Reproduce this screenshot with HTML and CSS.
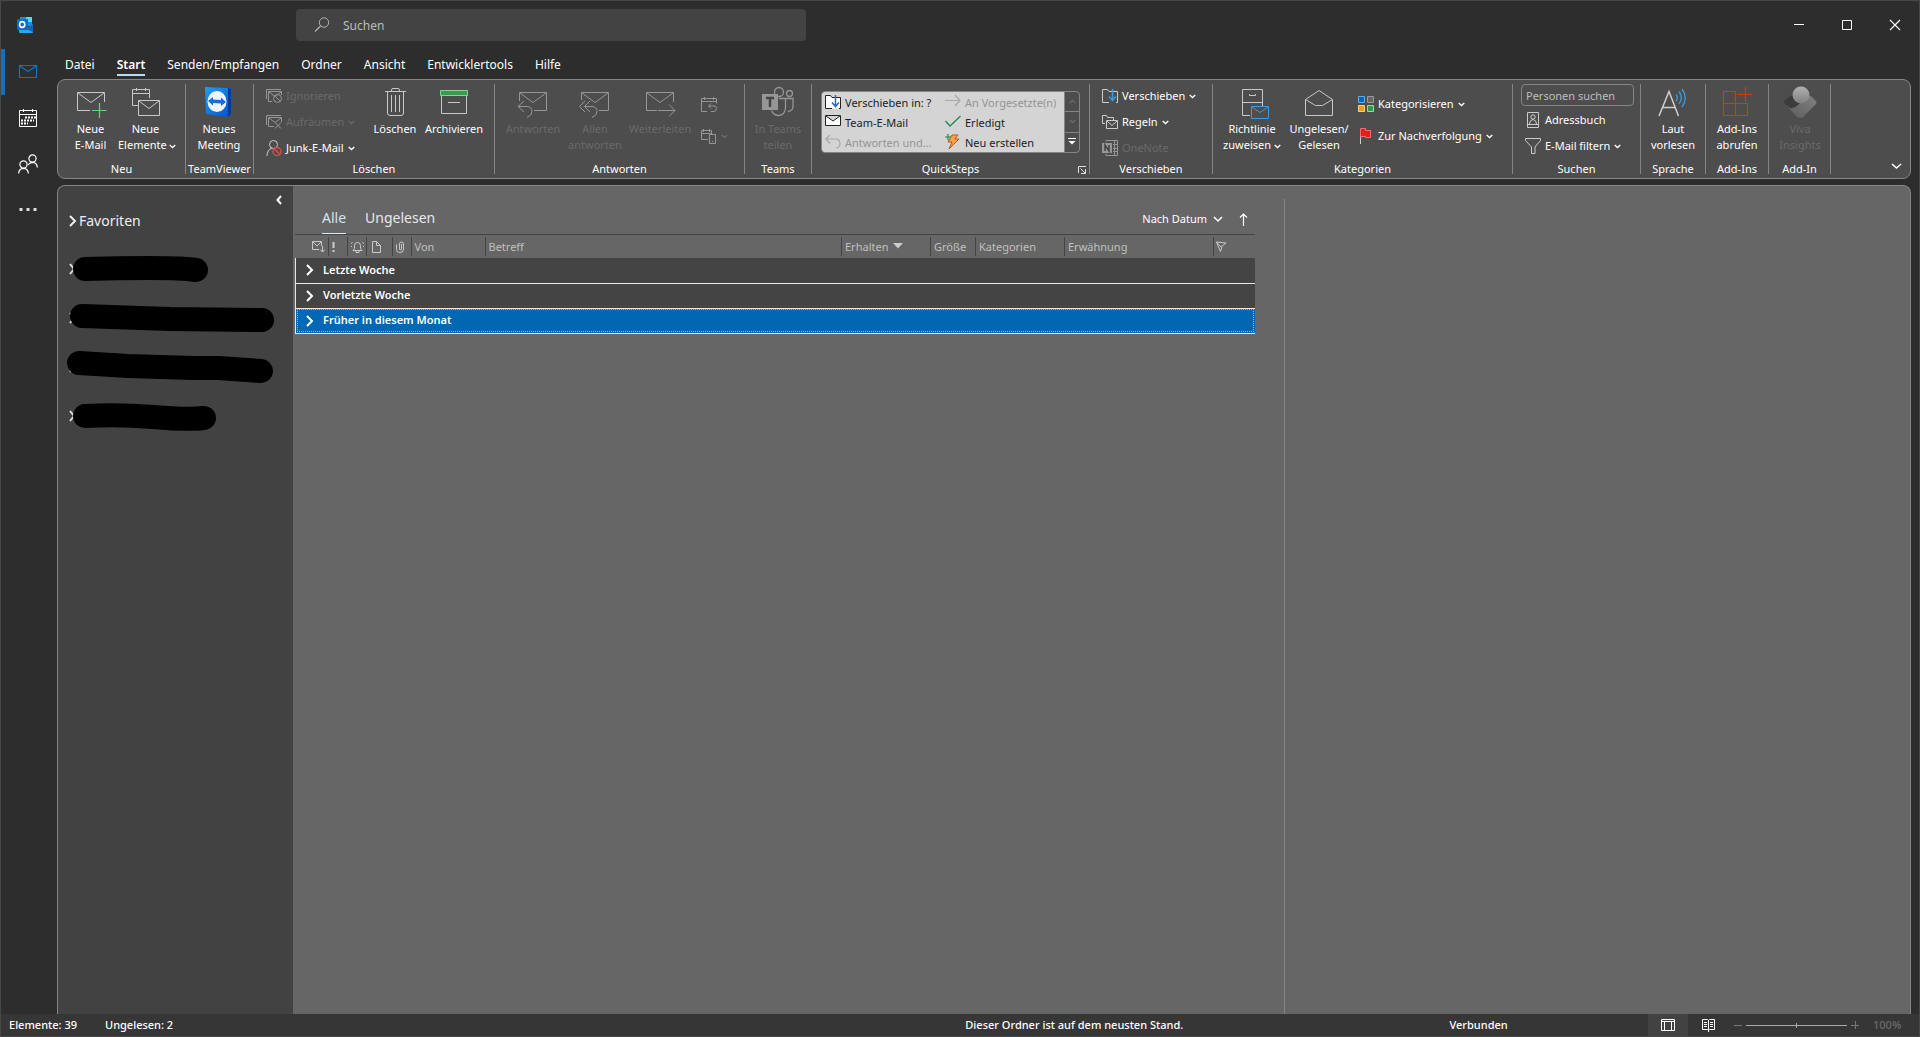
FILE: index.html
```html
<!DOCTYPE html>
<html lang="de">
<head>
<meta charset="utf-8">
<title>Outlook</title>
<link rel="stylesheet" href="styles.css">
</head>
<body>
<svg class="defs" aria-hidden="true">
  <symbol id="chev" viewBox="0 0 7 5"><path d="M.7 1l2.8 2.6L6.3 1" fill="none" stroke="currentColor" stroke-width="1.3"/></symbol>
  <symbol id="right" viewBox="0 0 8 12"><path d="M1 1l5 5-5 5" fill="none" stroke="currentColor" stroke-width="2"/></symbol>
</svg>
<div class="window">
  <header class="titlebar">
    <svg class="logo" width="16" height="16" viewBox="0 0 16 16"><path d="M3 0h12v9H3z" fill="#1490df"/><path d="M9 0h6v5H9z" fill="#50d9ff"/><path d="M3 5h6v4H3z" fill="#0a64b8"/><path d="M2 8l7 4 7-5v8q0 1-1 1H3q-1 0-1-1z" fill="#28a8ea"/><path d="M9 12l7-5v8z" fill="#1464b4"/><rect y="2" width="11" height="11" rx="1" fill="#0f6cbd"/><ellipse cx="5.200" cy="7.500" rx="2.600" ry="2.900" fill="none" stroke="#fff" stroke-width="1.600"/></svg>
    <label class="search"><svg width="16" height="16" viewBox="0 0 16 16"><circle cx="10" cy="5.500" r="4.700" fill="none" stroke="currentColor"/><path d="M6.500 9L1 14.500" stroke="currentColor" stroke-width="1.200"/></svg><input type="search" placeholder="Suchen" aria-label="Suchen"></label>
    <div class="controls">
      <button aria-label="Minimieren"><svg width="12" height="12"><path d="M1 5.500h10" stroke="#fff"/></svg></button>
      <button aria-label="Maximieren"><svg width="12" height="12"><path d="M1.500 1.500h9v9h-9z" fill="none" stroke="#fff"/></svg></button>
      <button aria-label="Schließen"><svg width="12" height="12"><path d="M1 1l10 10M11 1L1 11" stroke="#fff" stroke-width="1.200"/></svg></button>
    </div>
  </header>

  <nav class="rail" aria-label="Module">
    <button class="active" aria-label="E-Mail"><svg width="20" height="20" viewBox="0 0 20 20"><path d="M1.500 3.500h17v12h-17zM2 4l8 5.500L18 4" fill="none" stroke="currentColor" stroke-width="1.200"/></svg></button>
    <button aria-label="Kalender"><svg width="20" height="20" viewBox="0 0 20 20"><path d="M1.500 2.500h17v16h-17zM1.500 6.500h17M5.500 1v3M14.500 1v3" fill="none" stroke="currentColor"/><path d="M7 9.500h11M3 12.500h13M3 15.500h7" fill="none" stroke="currentColor" stroke-width="2" stroke-dasharray="2 1"/></svg></button>
    <button aria-label="Personen"><svg width="20" height="20" viewBox="0 0 20 20"><g fill="none" stroke="currentColor" stroke-width="1.200"><circle cx="5.500" cy="10.500" r="3.600"/><path d="M.6 19.500q.4-5 4.900-5.200 4.500.2 4.900 5.200"/><circle cx="14.500" cy="4.500" r="3.600"/><path d="M10 11q1.500-2.500 4.500-2.700 4.500.2 4.900 5.200"/></g></svg></button>
    <button aria-label="Mehr"><svg width="20" height="20" viewBox="0 0 20 20"><path d="M1.500 8h3v3h-3zM8.500 8h3v3h-3zM15.500 8h3v3h-3z" fill="#ddd"/></svg></button>
  </nav>

  <nav class="tabs" aria-label="Menüband">
    <a href="#">Datei</a><a href="#" class="active">Start</a><a href="#">Senden/Empfangen</a><a href="#">Ordner</a><a href="#">Ansicht</a><a href="#">Entwicklertools</a><a href="#">Hilfe</a>
  </nav>

  <section class="ribbon">
    <div class="group g-new">
      <div class="tools">
        <button class="big w55"><svg viewBox="0 0 32 32"><path d="M15 24.500H2.500v-18h27V16M3 7l13 9.500L29 7" fill="none" stroke="#c8c8c8"/><path d="M17 24.500h14.500M24.500 17v15" stroke="#5fd87c" stroke-width="1.200"/></svg>Neue<br>E-Mail</button>
        <button class="big w55"><svg viewBox="0 0 32 32"><g fill="none" stroke="#c8c8c8"><path d="M8 19.500H2.500v-16h17V12M2.500 7.500h17M6.500 2v3M15.500 2v3M8.500 14.500h21v15h-21zM9 15l10 7.500L29 15"/></g></svg>Neue<br>Elemente <svg class="chev"><use href="#chev"/></svg></button>
      </div>
      <h2>Neu</h2>
    </div>
    <div class="group g-tv">
      <div class="tools">
        <button class="big w66"><svg viewBox="0 0 32 32"><defs><linearGradient id="tv" x1="0" y1="0" x2="1" y2="1"><stop offset="0" stop-color="#1ea0f5"/><stop offset="1" stop-color="#0650c8"/></linearGradient></defs><path d="M2 1l22 1 4 1v25l-4 3L3 28z" fill="url(#tv)"/><path d="M25 2l3 1v25l-3 3z" fill="#043aa0"/><ellipse cx="14" cy="15.500" rx="9.500" ry="10.500" fill="#f0f4fa"/><path d="M5 15l5-4v2.500l8 .5v-2.500l5 4.500-5 4v-2.500l-8-.5v2.500z" fill="#1470d8"/></svg>Neues<br>Meeting</button>
      </div>
      <h2>TeamViewer</h2>
    </div>
    <div class="group g-del">
      <div class="tools">
        <div class="stack">
          <button class="small" disabled><svg viewBox="0 0 16 16"><g fill="none" stroke="currentColor"><path d="M.5 11V1.500H15M6 13.500H2.500v-10h13V7M3 4l6 4.500L15 4"/><circle cx="11.500" cy="10.500" r="4"/><path d="M9 8l5 5"/></g></svg>Ignorieren</button>
          <button class="small" disabled><svg viewBox="0 0 16 16"><path d="M.5 11V1.500H15M8 12.500H2.500v-9h13V8M3 4l6 4.500L15 4M9 8.500l6 6M15 8.500l-6 6" fill="none" stroke="currentColor"/></svg>Aufräumen <svg class="chev"><use href="#chev"/></svg></button>
          <button class="small"><svg viewBox="0 0 16 16"><g fill="none" stroke="#ccc"><circle cx="7.500" cy="4.500" r="4"/><path d="M1 16q0-6 5-8"/></g><circle cx="11" cy="11.500" r="4" fill="#4d4d4d" stroke="#e8494f" stroke-width="1.300"/><path d="M8.300 9l5.400 5" stroke="#e8494f" stroke-width="1.300"/></svg>Junk-E-Mail <svg class="chev"><use href="#chev"/></svg></button>
        </div>
        <button class="big w58"><svg viewBox="0 0 32 32"><path d="M6 5.500h21M12.500 5V4q0-1.500 1.500-1.500h5q1.500 0 1.500 1.500v1M8.500 6v21q0 2.500 2.500 2.500h11q2.500 0 2.500-2.500V6M12.500 9v17M16.500 9v17M20.500 9v17" fill="none" stroke="#c8c8c8"/></svg>Löschen</button>
        <button class="big w60"><svg viewBox="0 0 32 32"><path d="M3.500 9.500h25v18h-25zM10 16.500h12" fill="none" stroke="#c8c8c8"/><path d="M2.500 4.500h27v5h-27z" fill="#3a9b50" stroke="#7fd793"/></svg>Archivieren</button>
      </div>
      <h2>Löschen</h2>
    </div>
    <div class="group g-ans">
      <div class="tools">
        <button class="big w60" disabled><svg viewBox="0 0 32 32"><path d="M2.500 15V6.500h27v18H17M3 7l13 9.500L29 7M7 15l-6 5.500L7 26M1 20.500h9q5 .5 5 5 0 4-5 6" fill="none" stroke="currentColor"/></svg>Antworten</button>
        <button class="big w64" disabled><svg viewBox="0 0 32 32"><path d="M2.500 14V6.500h27v18H20M3 7l13 9.500L29 7M6 15l-5.500 5.500L6 26M11 15l-5.500 5.500L11 26M6 20.500h7q5 .5 5 5 0 4-5 6" fill="none" stroke="currentColor"/></svg>Allen<br>antworten</button>
        <button class="big w66" disabled><svg viewBox="0 0 32 32"><path d="M13 24.500H2.500v-18h27V16M3 7l13 9.500L29 7M14 24.500h17M25 18.500l6 6-6 6" fill="none" stroke="currentColor"/></svg>Weiterleiten</button>
        <div class="stack loose">
          <button class="small" disabled aria-label="Besprechung"><svg viewBox="0 0 16 16"><path d="M6 15.500H.500v-13h15v5M.500 5.500h15M3.500 1v3M12.500 1v3M10 7.500l-2.500 2.500 2.500 2.500M8 10h5q2.500 0 2.500 2.500T13 15.500h-3" fill="none" stroke="currentColor"/></svg></button>
          <button class="small" disabled aria-label="Weitere"><svg viewBox="0 0 16 16"><path d="M7 11.500H.500v-9h10V6M.500 5.500h10M2.500 1v3M8.500 1v3M8.500 6.500h6v9h-6zM11 13.500h1" fill="none" stroke="currentColor"/></svg><svg class="chev"><use href="#chev"/></svg></button>
        </div>
      </div>
      <h2>Antworten</h2>
    </div>
    <div class="group g-teams">
      <div class="tools">
        <button class="big w66" disabled><svg viewBox="0 0 32 32"><g fill="none" stroke="currentColor" stroke-width="1.300"><circle cx="17" cy="6" r="4.500"/><circle cx="27.500" cy="7.500" r="3"/><path d="M17 12.500h6.500V22q-.5 7-7 7.500-5.500-.5-7-5M23.500 12.500H31V21q-.5 4-5 4.500"/></g><path d="M0 8h16v16H0z" fill="#969696"/><path d="M4 12h8M8 12v9" stroke="#444" stroke-width="2.500"/></svg>In Teams<br>teilen</button>
      </div>
      <h2>Teams</h2>
    </div>
    <div class="group g-quick">
      <div class="tools">
        <div class="gallery">
          <div class="steps">
            <button><svg viewBox="0 0 16 16"><path d="M7 14.500H.500v-13h5l1.500 2h8.500v11H14" fill="#fff" stroke="#222"/><path d="M10.500 1v11M7 8.500l3.500 4 3.500-4" fill="none" stroke="#2a6cc0" stroke-width="1.500"/></svg>Verschieben in: ?</button>
            <button disabled><svg viewBox="0 0 16 16"><path d="M0 6.500h15M10 1l5 5.500-5 5.500" fill="none" stroke="#a8a8a8" stroke-width="1.200"/></svg>An Vorgesetzte(n)</button>
            <button><svg viewBox="0 0 16 16"><path d="M.500 1.500h15v10H.500zM1 2l7 5 7-5" fill="#fff" stroke="#222"/></svg>Team-E-Mail</button>
            <button><svg viewBox="0 0 16 16"><path d="M.500 7l4.500 5L15.500 2" fill="none" stroke="#1f8a4a" stroke-width="1.300"/></svg>Erledigt</button>
            <button disabled><svg viewBox="0 0 16 16"><path d="M5 1L.8 5 5 9.500M1 5h10q4 .5 4 4.500t-4 4.500" fill="none" stroke="#a8a8a8" stroke-width="1.200"/></svg>Antworten und...</button>
            <button><svg viewBox="0 0 16 16"><path d="M7 1h6l-3 4h4L4 15l3-7H3z" fill="#f7a04a" stroke="#b85a14"/><path d="M3 0v6M0 3h6" stroke="#1f8a4a" stroke-width="1.200"/></svg>Neu erstellen</button>
          </div>
          <div class="spin">
            <button disabled aria-label="Nach oben"><svg class="chev flip"><use href="#chev"/></svg></button>
            <button disabled aria-label="Nach unten"><svg class="chev"><use href="#chev"/></svg></button>
            <button aria-label="Weitere QuickSteps"><svg width="8" height="8" viewBox="0 0 8 8"><path d="M0 .500h8" stroke="#fff"/><path d="M.500 3h7L4 6.500z" fill="#fff"/></svg></button>
          </div>
        </div>
      </div>
      <h2>QuickSteps</h2>
      <button class="launcher" aria-label="QuickSteps verwalten"><svg width="8" height="8" viewBox="0 0 8 8"><path d="M.500 7V.500H8M2.500 2.500l5 5M7.500 3v4.500H3" fill="none" stroke="#ddd"/></svg></button>
    </div>
    <div class="group g-move">
      <div class="tools">
        <div class="stack">
          <button class="small"><svg viewBox="0 0 16 16"><path d="M7 14.500H.500v-13h5l1.500 2h8.500v11H14" fill="none" stroke="#ccc"/><path d="M10.500 1v11M7 8.500l3.500 4 3.500-4" fill="none" stroke="#3c9be0" stroke-width="1.500"/></svg>Verschieben <svg class="chev"><use href="#chev"/></svg></button>
          <button class="small"><svg viewBox="0 0 16 16"><path d="M3 9.500H.500v-8h4l1 2h6V6M4.500 6.500h11v8h-11zM5 7l5 4.500L15 7" fill="none" stroke="#ccc"/></svg>Regeln <svg class="chev"><use href="#chev"/></svg></button>
          <button class="small" disabled><svg viewBox="0 0 16 16"><path d="M0 3h10v10H0z" fill="#969696"/><path d="M3 11V5l4 6V5" fill="none" stroke="#444" stroke-width="1.500"/><path d="M4 1.500V.500h11.500v15H4v-2M11 4.500h4M11 8.500h4M11 11.500h4M12.500 1v14" fill="none" stroke="#969696"/></svg>OneNote</button>
        </div>
      </div>
      <h2>Verschieben</h2>
    </div>
    <div class="group g-cat">
      <div class="tools">
        <button class="big w64"><svg viewBox="0 0 32 32"><path d="M14 29.500H6.500v-26h20V20M6.500 16.500h20M13.500 8v1.500h6V8" fill="none" stroke="#c8c8c8"/><path d="M15.500 20.500h17v12h-17zM16 21l8 5.500 8-5.500" fill="none" stroke="#3c9be0"/></svg>Richtlinie<br>zuweisen <svg class="chev"><use href="#chev"/></svg></button>
        <button class="big w70"><svg viewBox="0 0 32 32"><path d="M2.500 13.500L16 4.500l13.500 9v16h-27zM2.500 13.500l10 6h7l10-6" fill="none" stroke="#c8c8c8"/></svg>Ungelesen/<br>Gelesen</button>
        <div class="stack loose">
          <button class="small"><svg viewBox="0 0 16 16"><path d="M.500.500h6v6h-6z" fill="#0067b8" stroke="#5eaef0"/><path d="M9.500.500h6v6h-6z" fill="#666" stroke="#999"/><path d="M.500 9.500h6v6h-6z" fill="#f09a20" stroke="#ffd080"/><path d="M9.500 9.500h6v6h-6z" fill="#2f9a48" stroke="#8fe0a0"/></svg>Kategorisieren <svg class="chev"><use href="#chev"/></svg></button>
          <button class="small"><svg viewBox="0 0 16 16"><path d="M2.500 1v15" stroke="#ccc"/><path d="M2.500.500h5v2h5v7h-5v-1h-5z" fill="#e02020" stroke="#ff6a6a"/></svg>Zur Nachverfolgung <svg class="chev"><use href="#chev"/></svg></button>
        </div>
      </div>
      <h2>Kategorien</h2>
    </div>
    <div class="group g-find">
      <div class="tools">
        <div class="stack">
          <input type="text" placeholder="Personen suchen" aria-label="Personen suchen">
          <button class="small"><svg viewBox="0 0 16 16"><path d="M2.500.500h11v15h-11zM2.500 12.500h11" fill="none" stroke="#ccc"/><circle cx="8" cy="5" r="2.200" fill="none" stroke="#ccc"/><path d="M4.500 12q0-4 3.500-4.500 3.500.5 3.500 4.500" fill="none" stroke="#ccc"/></svg>Adressbuch</button>
          <button class="small"><svg viewBox="0 0 16 16"><path d="M.500.500h15v2L10 9v6.500H6.500V9L.500 2.500z" fill="none" stroke="#ccc"/></svg>E-Mail filtern <svg class="chev"><use href="#chev"/></svg></button>
        </div>
      </div>
      <h2>Suchen</h2>
    </div>
    <div class="group g-voice">
      <div class="tools">
        <button class="big w64"><svg viewBox="0 0 32 32"><path d="M2 30L12 5.500 21.500 30M5.500 21.500h13" fill="none" stroke="#d0d0d0" stroke-width="1.500"/><path d="M19 8.500q2.500 3 0 7M22 5.500q4.500 6 0 12.500M25 3q6.500 9 0 18" fill="none" stroke="#3c9be0" stroke-width="1.300"/></svg>Laut<br>vorlesen</button>
      </div>
      <h2>Sprache</h2>
    </div>
    <div class="group g-addins">
      <div class="tools">
        <button class="big w62"><svg viewBox="0 0 32 32"><path d="M2.500 5.500h12v24h-12zM2.500 17.500h24v12h-12M16.500 8.500h15M24.500 1v15" fill="none" stroke="#d83b01" stroke-width="1.200"/></svg>Add-Ins<br>abrufen</button>
      </div>
      <h2>Add-Ins</h2>
    </div>
    <div class="group g-viva">
      <div class="tools">
        <button class="big w62" disabled><svg viewBox="0 0 32 32"><defs><linearGradient id="vv" x1="0" y1="0" x2="0" y2="1"><stop offset="0" stop-color="#b0b0b0"/><stop offset="1" stop-color="#808080"/></linearGradient><linearGradient id="vh" x1="0" y1="1" x2="1" y2="0"><stop offset="0" stop-color="#5c5c5c"/><stop offset="1" stop-color="#808080"/></linearGradient></defs><path d="M7 9.500q2-1 4 1l9 10-4 11q-1 0-4-3L1 18q-2-2 0-4z" fill="#3c3c3c"/><path d="M24 10q2-1 4 1l4 4q1 2 0 3L19 31q-3 2-6 0L2 19l4 3q4 1 8-3z" fill="url(#vh)"/><circle cx="17" cy="9" r="8.500" fill="url(#vv)"/></svg>Viva<br>Insights</button>
      </div>
      <h2>Add-In</h2>
    </div>
    <button class="collapse" aria-label="Menüband reduzieren"><svg width="11" height="7"><path d="M1 1l4.500 4L10 1" fill="none" stroke="#fff" stroke-width="1.600"/></svg></button>
  </section>

  <main class="content">
    <aside class="folders">
      <button class="hide" aria-label="Ordnerbereich minimieren"><svg width="6" height="10"><path d="M5 1L1.500 5 5 9" fill="none" stroke="#fff" stroke-width="2"/></svg></button>
      <h1><svg width="8" height="12"><use href="#right"/></svg>Favoriten</h1>
      <ul>
        <li><svg width="234" height="49"><path d="M12 19l4 5-4 5" class="tick"/><path d="M27 24Q60 23 92 23T138 25" class="bar"/></svg></li>
        <li><svg width="234" height="49"><path d="M12 19l4 5-4 5" class="tick"/><path d="M24 22L112 25 204 26" class="bar"/></svg></li>
        <li><svg width="234" height="49"><path d="M12 19l4 5-4 5" class="tick"/><path d="M21 20L70 23 135 25 160 25 203 28" class="bar"/></svg></li>
        <li><svg width="234" height="49"><path d="M12 19l4 5-4 5" class="tick"/><path d="M27 24Q60 22 95 25T146 26" class="bar"/></svg></li>
      </ul>
    </aside>
    <section class="list">
      <div class="filter">
        <a href="#" class="active">Alle</a><a href="#">Ungelesen</a>
        <button class="sort">Nach Datum <svg width="10" height="7"><path d="M1 1l4 4 4-4" fill="none" stroke="#fff" stroke-width="1.500"/></svg></button>
        <button aria-label="Sortierung umkehren"><svg width="9" height="13"><path d="M4.500 13V1M1 4.500L4.500 1 8 4.500" fill="none" stroke="#fff" stroke-width="1.200"/></svg></button>
      </div>
      <table>
        <colgroup><col class="c33"><col class="c19"><col class="c19"><col class="c26"><col class="c19"><col class="c74"><col><col class="c89"><col class="c45"><col class="c89"><col class="c149"><col class="c41"></colgroup>
        <thead><tr>
          <th class="end" aria-label="Status"><svg width="13" height="12"><path d="M7 8.500H.500v-8h9V5M1 1l4 4 4-4M10.500 5v6M8 8.500l2.500 2.500 2.500-2.500" fill="none" stroke="#c8c8c8"/></svg></th>
          <th aria-label="Wichtigkeit"><svg width="3" height="12"><path d="M1.500 1v6M1.500 9v2" stroke="#ccc" stroke-width="2"/></svg></th>
          <th aria-label="Erinnerung"><svg width="13" height="12"><path d="M2 9.500l1.500-2V4.500q0-3 3-3t3 3v3l1.500 2zM5 10v1.500h3V10M0 2.500l1.500-1M13 2.500l-1.500-1M0 5.500h1M12 5.500h1" fill="none" stroke="#c8c8c8"/></svg></th>
          <th aria-label="Typ"><svg width="11" height="12"><path d="M2.500.500h4l4 4v7h-8zM6.500.500v4h4" fill="none" stroke="#c8c8c8"/></svg></th>
          <th aria-label="Anlage"><svg width="8" height="12"><path d="M5.500 3v5q0 1-1 1t-1-1V3q0-2 2-2t2 2v5.500q0 3-3.500 3T.500 8.500V3.500" fill="none" stroke="#c8c8c8"/></svg></th>
          <th>Von</th><th>Betreff</th><th>Erhalten <svg class="down" width="10" height="6"><path d="M0 0h10L5 5.500z" fill="#ccc"/></svg></th><th>Größe</th><th>Kategorien</th><th>Erwähnung</th>
          <th aria-label="Kennzeichnung"><svg width="11" height="11"><path d="M.500 1l9.500 1-5 4zM.500 1l4 9.500L6 6" fill="none" stroke="#c8c8c8"/></svg></th>
        </tr></thead>
        <tbody>
          <tr><td colspan="12"><svg width="8" height="12"><use href="#right"/></svg>Letzte Woche</td></tr>
          <tr><td colspan="12"><svg width="8" height="12"><use href="#right"/></svg>Vorletzte Woche</td></tr>
          <tr class="selected"><td colspan="12"><svg width="8" height="12"><use href="#right"/></svg>Früher in diesem Monat</td></tr>
        </tbody>
      </table>
    </section>
    <section class="reading" aria-label="Lesebereich"></section>
  </main>

  <footer class="status">
    <div class="counts"><span>Elemente: 39</span><span>Ungelesen: 2</span></div>
    <span class="sync">Dieser Ordner ist auf dem neusten Stand.</span>
    <span class="conn">Verbunden</span>
    <button class="view active" aria-label="Normal"><svg width="14" height="12"><path d="M.500.500h13v11H.500zM.500 2.500h13M3.500 2.500v9M10.500 2.500v9" fill="none" stroke="#fff"/></svg></button>
    <button class="view" aria-label="Lesen"><svg width="13" height="13"><path d="M.500.500h5l1 1 1-1h5v10h-5l-1 1-1-1h-5zM6.500 1v12M2 3.500h3M2 5.500h3M2 7.500h3M8 3.500h3M8 5.500h3M8 7.500h3" fill="none" stroke="#fff"/></svg></button>
    <div class="zoom">
      <button aria-label="Verkleinern"><svg width="8" height="8"><path d="M0 4.500h8" stroke="#777"/></svg></button>
      <input type="range" aria-label="Zoom" min="0" max="200" value="100">
      <button aria-label="Vergrößern"><svg width="8" height="8"><path d="M0 4.500h8M4.500 0v8" stroke="#777"/></svg></button>
      <span>100%</span>
    </div>
  </footer>
</div>
</body>
</html>
```
FILE: styles.css
```css
* { box-sizing: border-box; }
body {
  margin: 0;
  background: #2d2d2d;
  color: #fff;
  font: 11px/16px "Noto Sans", "Open Sans", sans-serif;
}
button, input { font: inherit; color: inherit; border: 0; background: none; padding: 0; margin: 0; }
a { color: inherit; text-decoration: none; }
h1, h2, ul { margin: 0; padding: 0; font-weight: 400; list-style: none; }
svg { display: block; flex: none; }
.defs { position: absolute; width: 0; height: 0; }
.chev { display: inline-block; width: 7px; height: 5px; vertical-align: middle; }
.flip { transform: rotate(180deg); }

.window {
  display: grid;
  grid-template: 48px 30px 100px minmax(0, 1fr) 23px / 56px minmax(0, 1fr) 8px;
  grid-template-areas: "title title title" "rail tabs ." "rail ribbon ." "rail main ." "status status status";
  min-height: 100vh;
  border: 1px solid #484848;
  border-bottom: 0;
}
.titlebar { grid-area: title; display: flex; align-items: flex-start; }
.logo { margin: 16px 0 0 16px; }
.search {
  display: flex; align-items: center; gap: 13px;
  width: 510px; height: 32px; margin: 8px 0 0 263px; padding: 0 18px;
  background: #434343; border-radius: 4px; color: #b4b4b4;
}
.search input { flex: 1; padding-top: 2px; font-size: 12px; outline: 0; }
::placeholder { color: #bdbdbd; opacity: 1; }
.controls { display: flex; margin-left: auto; }
.controls button { width: 48px; height: 47px; display: grid; place-items: center; }

.rail { grid-area: rail; display: flex; flex-direction: column; }
.rail button { height: 46px; padding-left: 17px; display: flex; align-items: center; }
.rail .active { color: #0f72c4; border-left: 4px solid #0f72c4; padding-left: 13px; }

.tabs { grid-area: tabs; display: flex; gap: 22px; padding: 5px 0 0 8px; font-size: 12px; line-height: 22px; }
.tabs a { height: 22px; }
.tabs .active { font-weight: 600; border-bottom: 2px solid #b9d8f2; }

.ribbon {
  grid-area: ribbon; display: flex; padding: 4px 0; position: relative;
  background: #4d4d4d; border: 1px solid #858585; border-radius: 8px;
}
.group { display: flex; flex-direction: column; flex: none; position: relative; border-right: 1px solid #858585; }
.tools { display: flex; height: 81px; }
.group h2 { text-align: center; font-size: 11px; line-height: 10px; }
.g-new { width: 128px; } .g-new .tools { padding-left: 5px; }
.g-tv { width: 68px; }
.g-del { width: 241px; } .g-del .stack { width: 100px; } .g-del .tools { padding-left: 12px; }
.g-ans { width: 250px; } .g-ans .tools { padding-left: 8px; } .g-ans .loose { padding-left: 8px; }
.g-teams { width: 67px; }
.g-quick { width: 278px; } .g-quick .tools { padding-left: 9px; }
.g-move { width: 123px; } .g-move .tools { padding-left: 12px; }
.g-cat { width: 300px; } .g-cat .tools { padding-left: 7px; } .g-cat .loose { padding-left: 4px; }
.g-find { width: 128px; } .g-find .tools { padding-left: 8px; }
.g-voice { width: 65px; }
.g-addins { width: 63px; }
.g-viva { width: 62px; }
.w55 { width: 55px; } .w58 { width: 58px; } .w60 { width: 60px; } .w62 { width: 62px; } .w64 { width: 64px; } .w66 { width: 66px; } .w70 { width: 70px; }

.big { padding-top: 2px; white-space: nowrap; text-align: center; display: block; flex: none; align-self: flex-start; }
.big > svg:first-child { width: 32px; height: 32px; margin: 0 auto 3px; overflow: visible; }
.big:disabled, .small:disabled { color: #6a6a6a; }
.big:disabled > svg:first-child, .small:disabled > svg:first-child { color: #969696; }
.stack { display: flex; flex-direction: column; gap: 2px; }
.stack.loose { gap: 8px; padding-top: 8px; }
.small { display: flex; align-items: center; gap: 4px; height: 24px; white-space: nowrap; }
.small > svg:first-child { width: 16px; height: 16px; }
.g-find .small > svg:first-child { margin-left: 4px; }
.g-find input { width: 113px; height: 22px; padding: 0 4px; border: 1px solid #858585; border-radius: 4px; }

.gallery { display: flex; height: 62px; width: 259px; margin-top: 7px; border: 1px solid #858585; border-radius: 4px; overflow: hidden; }
.steps { flex: 1; display: grid; grid-template: repeat(3, 20px) / 120px 1fr; padding-left: 3px; background: #d4d4d4; color: #222; }
.steps button { display: flex; align-items: center; gap: 4px; white-space: nowrap; padding-top: 2px; }
.steps button:disabled { color: #949494; }
.steps svg { width: 16px; height: 16px; margin-bottom: 2px; }
.spin { width: 15px; display: flex; flex-direction: column; border-left: 1px solid #858585; }
.spin button { flex: 1; display: grid; place-items: center; border-bottom: 1px solid #858585; }
.spin button:disabled { color: #6c6c6c; }
.spin button:last-child { border: 0; }
.launcher { position: absolute; right: 3px; bottom: 0; }
.collapse { margin: auto 8px 4px auto; }

.content {
  grid-area: main; display: flex; margin-top: 6px; overflow: hidden;
  background: #666; border: 1px solid #858585; border-bottom: 0; border-radius: 8px 8px 0 0;
}
.folders { width: 235px; flex: none; background: #424242; }
.hide { display: block; margin: 9px 11px 0 auto; }
.folders h1 { display: flex; align-items: center; gap: 2px; font-size: 14px; line-height: 20px; padding: 6px 0 0 11px; color: #eee; }
.folders ul { padding-top: 14px; }
.bar { fill: none; stroke: #000; stroke-width: 24px; stroke-linecap: round; stroke-linejoin: round; }
.tick { fill: none; stroke: #ddd; stroke-width: 2px; }
.list { flex: 960 1 0; padding: 0 29px 0 2px; min-width: 0; }
.reading { flex: 625 1 0; margin-top: 13px; border-left: 1px solid #858585; }
.filter { display: flex; align-items: flex-end; height: 49px; padding: 0 7px 0 27px; border-bottom: 1px solid #444; }
.filter a { font-size: 14px; line-height: 24px; height: 28px; margin-right: 19px; color: #e8e8e8; }
.filter .active { color: #cfe4f5; border-bottom: 1px solid #dcecf8; }
.filter button { display: flex; align-items: center; gap: 6px; height: 30px; }
.filter .sort { margin-left: auto; margin-right: 16px; }

table { width: 100%; table-layout: fixed; border-collapse: collapse; }
.c19 { width: 19px; } .c26 { width: 26px; } .c33 { width: 33px; } .c41 { width: 41px; } .c45 { width: 45px; } .c74 { width: 74px; } .c89 { width: 89px; } .c149 { width: 149px; }
th {
  height: 23px; padding: 0 0 0 3px; font-weight: 400; text-align: left; color: #c0c0c0; white-space: nowrap;
  background: linear-gradient(#444, #444) right 2px / 1px 19px no-repeat;
}
th:last-child { background: none; padding-left: 2px; }
th.end { padding-left: 16px; }
th .down { display: inline-block; margin: 0 0 2px 2px; }
td { height: 25px; padding: 0 0 0 10px; background: #444; border-bottom: 1px solid #e8e8e8; border-left: 1px solid #e8e8e8; font-weight: 600; }
td svg { display: inline-block; vertical-align: middle; margin: 0 9px 2px 0; }
.selected td { background: #0067b2; outline: 1px dotted #f0a060; outline-offset: -2px; }

.status { grid-area: status; display: flex; align-items: center; background: #363636; font-weight: 500; border-bottom: 1px solid #484848; }
.counts { display: flex; gap: 28px; padding-left: 8px; flex: 954 1 0; }
.sync { flex: 483 1 0; }
.conn { flex: 198 1 0; }
.view { width: 40px; height: 22px; display: grid; place-items: center; }
.view.active { background: #424242; }
.zoom { display: flex; align-items: center; gap: 4px; padding-left: 6px; width: 191px; color: #6c6c6c; }
.zoom input { appearance: none; width: 101px; height: 5px; background: linear-gradient(#aaa, #aaa) center / 100% 1px no-repeat; }
.zoom input::-webkit-slider-thumb { appearance: none; width: 1px; height: 5px; background: #aaa; }
.zoom span { margin-left: 10px; }
```
